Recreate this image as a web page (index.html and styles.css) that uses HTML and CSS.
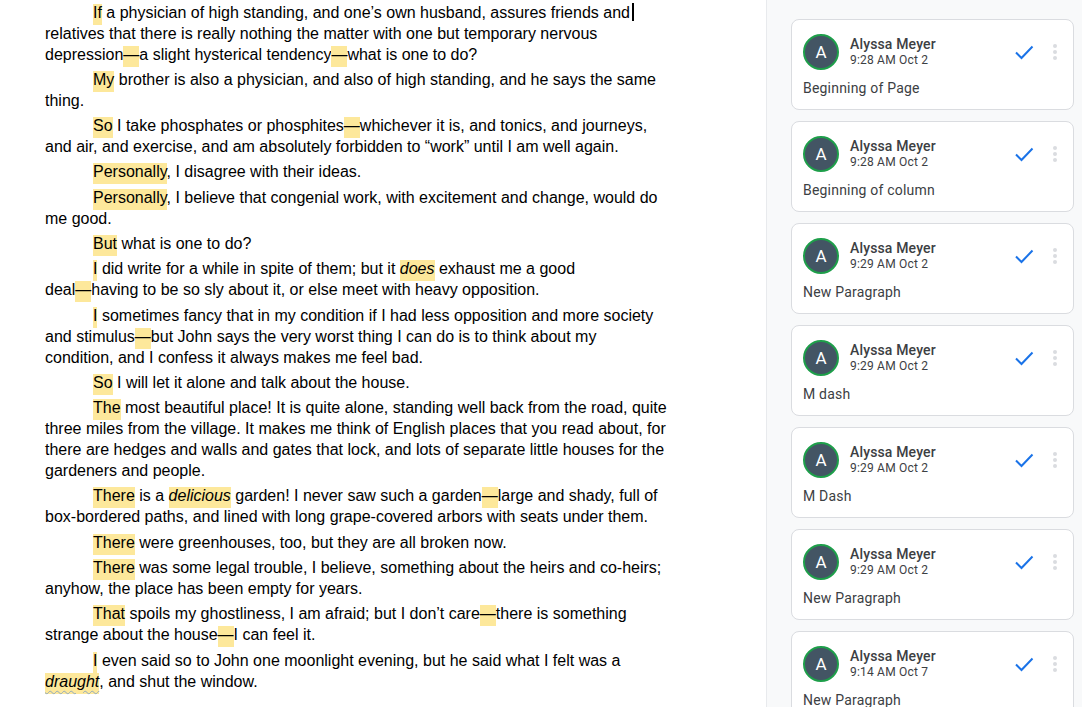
FILE: index.html
```html
<!DOCTYPE html>
<html lang="en">
<head>
<meta charset="utf-8">
<title>Document with comments</title>
<link rel="stylesheet" href="styles.css">
</head>
<body>
<div class="app">
  <main class="doc">
    <p><span class="hl">If</span> a physician of high standing, and one’s own husband, assures friends and <span class="cursor"></span><br>relatives that there is really nothing the matter with one but temporary nervous<br>depression<span class="hl dash">—</span>a slight hysterical tendency<span class="hl dash">—</span>what is one to do?</p>
    <p><span class="hl">My</span> brother is also a physician, and also of high standing, and he says the same<br>thing.</p>
    <p><span class="hl">So</span> I take phosphates or phosphites<span class="hl dash">—</span>whichever it is, and tonics, and journeys,<br>and air, and exercise, and am absolutely forbidden to “work” until I am well again.</p>
    <p><span class="hl">Personally</span>, I disagree with their ideas.</p>
    <p><span class="hl">Personally</span>, I believe that congenial work, with excitement and change, would do<br>me good.</p>
    <p><span class="hl">But</span> what is one to do?</p>
    <p><span class="hl">I</span> did write for a while in spite of them; but it <em class="hl">does</em> exhaust me a good<br>deal<span class="hl dash">—</span>having to be so sly about it, or else meet with heavy opposition.</p>
    <p><span class="hl">I</span> sometimes fancy that in my condition if I had less opposition and more society<br>and stimulus<span class="hl dash">—</span>but John says the very worst thing I can do is to think about my<br>condition, and I confess it always makes me feel bad.</p>
    <p><span class="hl">So</span> I will let it alone and talk about the house.</p>
    <p><span class="hl">The</span> most beautiful place! It is quite alone, standing well back from the road, quite<br>three miles from the village. It makes me think of English places that you read about, for<br>there are hedges and walls and gates that lock, and lots of separate little houses for the<br>gardeners and people.</p>
    <p><span class="hl">There</span> is a <em class="hl">delicious</em> garden! I never saw such a garden<span class="hl dash">—</span>large and shady, full of<br>box-bordered paths, and lined with long grape-covered arbors with seats under them.</p>
    <p><span class="hl">There</span> were greenhouses, too, but they are all broken now.</p>
    <p><span class="hl">There</span> was some legal trouble, I believe, something about the heirs and co-heirs;<br>anyhow, the place has been empty for years.</p>
    <p><span class="hl">That</span> spoils my ghostliness, I am afraid; but I don’t care<span class="hl dash">—</span>there is something<br>strange about the house<span class="hl dash">—</span>I can feel it.</p>
    <p><span class="hl">I</span> even said so to John one moonlight evening, but he said what I felt was a<br><em class="hl spell">draught</em>, and shut the window.</p>
  </main>

  <aside class="comments">
    <div class="card">
      <div class="card-head">
        <div class="avatar">A</div>
        <div class="who"><div class="name">Alyssa Meyer</div><div class="time">9:28 AM Oct 2</div></div>
        <svg class="check" viewBox="0 0 20 16" width="20" height="16"><polyline points="2,8.5 7.5,14 18.5,2.5" fill="none" stroke="#1a73e8" stroke-width="2"/></svg>
        <div class="more"><i></i><i></i><i></i></div>
      </div>
      <div class="body">Beginning of Page</div>
    </div>
    <div class="card">
      <div class="card-head">
        <div class="avatar">A</div>
        <div class="who"><div class="name">Alyssa Meyer</div><div class="time">9:28 AM Oct 2</div></div>
        <svg class="check" viewBox="0 0 20 16" width="20" height="16"><polyline points="2,8.5 7.5,14 18.5,2.5" fill="none" stroke="#1a73e8" stroke-width="2"/></svg>
        <div class="more"><i></i><i></i><i></i></div>
      </div>
      <div class="body">Beginning of column</div>
    </div>
    <div class="card">
      <div class="card-head">
        <div class="avatar">A</div>
        <div class="who"><div class="name">Alyssa Meyer</div><div class="time">9:29 AM Oct 2</div></div>
        <svg class="check" viewBox="0 0 20 16" width="20" height="16"><polyline points="2,8.5 7.5,14 18.5,2.5" fill="none" stroke="#1a73e8" stroke-width="2"/></svg>
        <div class="more"><i></i><i></i><i></i></div>
      </div>
      <div class="body">New Paragraph</div>
    </div>
    <div class="card">
      <div class="card-head">
        <div class="avatar">A</div>
        <div class="who"><div class="name">Alyssa Meyer</div><div class="time">9:29 AM Oct 2</div></div>
        <svg class="check" viewBox="0 0 20 16" width="20" height="16"><polyline points="2,8.5 7.5,14 18.5,2.5" fill="none" stroke="#1a73e8" stroke-width="2"/></svg>
        <div class="more"><i></i><i></i><i></i></div>
      </div>
      <div class="body">M dash</div>
    </div>
    <div class="card">
      <div class="card-head">
        <div class="avatar">A</div>
        <div class="who"><div class="name">Alyssa Meyer</div><div class="time">9:29 AM Oct 2</div></div>
        <svg class="check" viewBox="0 0 20 16" width="20" height="16"><polyline points="2,8.5 7.5,14 18.5,2.5" fill="none" stroke="#1a73e8" stroke-width="2"/></svg>
        <div class="more"><i></i><i></i><i></i></div>
      </div>
      <div class="body">M Dash</div>
    </div>
    <div class="card">
      <div class="card-head">
        <div class="avatar">A</div>
        <div class="who"><div class="name">Alyssa Meyer</div><div class="time">9:29 AM Oct 2</div></div>
        <svg class="check" viewBox="0 0 20 16" width="20" height="16"><polyline points="2,8.5 7.5,14 18.5,2.5" fill="none" stroke="#1a73e8" stroke-width="2"/></svg>
        <div class="more"><i></i><i></i><i></i></div>
      </div>
      <div class="body">New Paragraph</div>
    </div>
    <div class="card">
      <div class="card-head">
        <div class="avatar">A</div>
        <div class="who"><div class="name">Alyssa Meyer</div><div class="time">9:14 AM Oct 7</div></div>
        <svg class="check" viewBox="0 0 20 16" width="20" height="16"><polyline points="2,8.5 7.5,14 18.5,2.5" fill="none" stroke="#1a73e8" stroke-width="2"/></svg>
        <div class="more"><i></i><i></i><i></i></div>
      </div>
      <div class="body">New Paragraph</div>
    </div>
  </aside>
</div>
</body>
</html>
```

FILE: styles.css
```css
* { box-sizing: border-box; }

html, body {
  margin: 0;
  padding: 0;
  height: 707px;
  overflow: hidden;
  background: #ffffff;
}

.app {
  display: flex;
  height: 707px;
}

.doc {
  width: 766px;
  flex: none;
  padding: 1.5px 0 0 45px;
  font-family: "Liberation Sans", Arial, sans-serif;
  font-size: 16px;
  line-height: 21px;
  color: #000;
  white-space: nowrap;
  overflow: hidden;
}

.doc p {
  margin: 0 0 4.3px;
  text-indent: 48px;
}

.hl {
  background: #fde89b;
  padding-bottom: 4px;
}

em {
  font-style: italic;
}

.spell {
  text-decoration: underline wavy #8fa9bd;
  text-decoration-thickness: 1px;
  text-underline-offset: 3px;
}

.cursor {
  display: inline-block;
  width: 2px;
  height: 18px;
  background: #000;
  vertical-align: -3px;
  margin-left: -2px;
}

.comments {
  flex: 1;
  background: #f8f9fa;
  border-left: 1px solid #e8eaed;
  padding: 19px 8px 0 24px;
  display: flex;
  flex-direction: column;
  gap: 11px;
  overflow: hidden;
  font-family: Roboto, "Liberation Sans", Arial, sans-serif;
  color: #3c4043;
}

.card {
  flex: none;
  background: #fff;
  border: 1px solid #dadce0;
  border-radius: 8px;
  padding: 14px 0 11px 11px;
}

.card-head {
  display: flex;
  align-items: center;
  height: 36px;
}

.avatar {
  width: 36px;
  height: 36px;
  border-radius: 50%;
  background: #435564;
  border: 2px solid #1e9e4a;
  color: #fff;
  font-size: 17px;
  display: flex;
  align-items: center;
  justify-content: center;
  flex: none;
}

.who {
  margin-left: 11px;
  flex: 1;
}

.name {
  font-size: 14px;
  font-weight: 500;
  line-height: 16px;
  letter-spacing: 0.15px;
}

.time {
  font-size: 12px;
  line-height: 16px;
  letter-spacing: 0.2px;
}

.check {
  flex: none;
  margin-right: 19px;
}

.more {
  display: flex;
  flex-direction: column;
  gap: 2px;
  margin-right: 16px;
}

.more i {
  display: block;
  width: 4px;
  height: 4px;
  border-radius: 50%;
  background: #dadce0;
}

.body {
  margin-top: 8px;
  font-size: 14px;
  line-height: 20px;
  letter-spacing: 0.2px;
}
```
